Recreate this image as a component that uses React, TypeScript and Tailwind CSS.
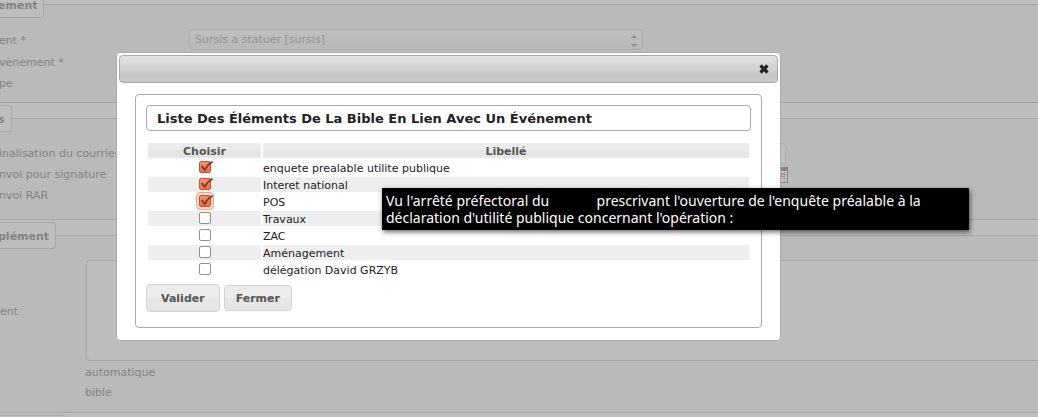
import { useState, type ReactNode } from 'react';

function Section({ title, className, children }: { title: string; className: string; children?: ReactNode }) {
  return (
    <fieldset className={`w-full min-w-0 border-y border-[#a8a8a8] bg-[#bababa] ${className}`}>
      <legend className="h-[27px] min-w-[10px] rounded-r border border-l-0 border-[#a8a8a8] bg-[#bebebe] pr-[6px] leading-[27px] font-bold">
        <span className="-ml-[2px] block">{title}</span>
      </legend>
      {children}
    </fieldset>
  );
}

function CalendarIcon() {
  return (
    <svg width="16" height="16" viewBox="0 0 16 16" aria-hidden="true" shapeRendering="crispEdges">
      <path d="M0 0h16v16H0z" fill="#85858a" />
      <path d="M1 4h14v11H1z" fill="#c2c2c2" />
      <path d="M1 7.5h14M1 11.5h14M4.500 4v11M8.500 4v11M12.500 4v11" stroke="#aaa" />
      <path d="M9.500 6.500h3v3h-3z" fill="none" stroke="#c08090" />
    </svg>
  );
}

const elements = [
  { label: 'enquete prealable utilite publique', checked: true },
  { label: 'Interet national', checked: true },
  { label: 'POS', checked: true },
  { label: 'Travaux', checked: false },
  { label: 'ZAC', checked: false },
  { label: 'Aménagement', checked: false },
  { label: 'délégation David GRZYB', checked: false },
];

function Tick({ id, initial, focused }: { id: string; initial: boolean; focused: boolean }) {
  const [on, setOn] = useState(initial);
  return (
    <span
      className={`relative -my-1 inline-flex size-[18px] items-center justify-center rounded border ${
        focused ? 'border-[#f2a285] bg-[#fbdcd0]' : 'border-transparent'
      }`}
    >
      <input
        id={id}
        type="checkbox"
        checked={on}
        onChange={() => setOn(!on)}
        className="size-3 appearance-none rounded-[2px] border border-[#948f8b] bg-white outline-none checked:border-[#bd5434] checked:bg-linear-to-b checked:from-[#fa9068] checked:to-[#ee6f43]"
      />
      {on && (
        <svg className="pointer-events-none absolute top-[2px] left-[2px]" width="14" height="12" viewBox="0 0 14 12" aria-hidden="true">
          <path d="M2.600 5.200 L5.800 8.800 C7.500 5.500 9.800 2.800 13.600 0.800" fill="none" stroke="#7b3c27" strokeWidth="1.800" />
        </svg>
      )}
    </span>
  );
}

const halftone = 'bg-linear-to-b from-[#ececec] from-50% to-[#e6e6e6] to-50%';

export default function App() {
  return (
    <div className="relative min-h-screen w-full overflow-hidden bg-[#bebebe] font-['DejaVu_Sans',sans-serif] text-[11px] text-[#828282]">
      <main className="-mt-[9px] flex h-[426px] flex-col gap-[2px] overflow-hidden">
        <Section title="ement" className="pb-[7px]">
          <div className="-ml-px pt-[11px] leading-6">
            <div className="flex h-[22px]">
              <label htmlFor="evenement" className="w-[190px]">ent *</label>
              <span className="relative">
                <select
                  id="evenement"
                  className="block h-[21px] w-[454px] appearance-none rounded border border-[#acacac] bg-linear-to-b from-[#bfbfbf] to-[#b8b8b8] pl-[5px] text-[11px] leading-5 text-[#929292]"
                >
                  <option>Sursis a statuer [sursis]</option>
                </select>
                <svg className="pointer-events-none absolute top-[5px] right-[6px]" width="6" height="13" viewBox="0 0 6 13" aria-hidden="true">
                  <path d="M0 4 3 1l3 3zM0 10l3 3 3-3z" fill="#8e8e8e" />
                </svg>
              </span>
            </div>
            <div className="h-[21px]">vènement *</div>
            <div className="h-[23px]">pe</div>
          </div>
        </Section>
        <Section title="s" className="pb-[13px]">
          <div className="-ml-px pt-[11px] leading-[22px]">
            <div className="flex h-[21px]">
              <label htmlFor="courrier" className="w-[190px] whitespace-nowrap">inalisation du courrier</label>
              <input id="courrier" className="h-[21px] w-[597px] rounded border border-[#acacac] bg-[#bfbfbf]" />
            </div>
            <div className="flex h-[21px]">
              <span className="w-[773px]">nvoi pour signature</span>
              <span className="pt-[3px]"><CalendarIcon /></span>
            </div>
            <div className="h-[21px]">nvoi RAR</div>
          </div>
        </Section>
        <Section title="plément" className="pb-[9px]">
          <div className="flex items-center pt-[11px]">
            <label htmlFor="complement" className="w-[86px] shrink-0 pt-[3px]">ent</label>
            <textarea id="complement" className="block h-[101px] min-w-0 flex-1 resize-none rounded-l border border-r-0 border-[#a8a8a8] bg-[#bebebe]" />
          </div>
          <div className="flex flex-col items-start pt-[2px] pl-[85px] leading-5">
            <a href="#automatique">automatique</a>
            <a href="#bible">bible</a>
          </div>
        </Section>
        <div className="h-[27px] w-[66px] shrink-0 rounded-r border border-l-0 border-[#a8a8a8]" />
      </main>

      <div role="dialog" aria-label="Liste des éléments" className="absolute top-[52px] left-[116px] w-[665px] rounded border border-[#aaa] bg-white p-[2px] text-[#222]">
        <div className="flex h-7 items-center justify-end rounded border border-[#aaa] bg-linear-to-b from-[#e2e2e2] to-[#c8c8c8] to-70% pr-[8px]">
          <button type="button" aria-label="Fermer la fenêtre">
            <svg width="10" height="10" viewBox="0 0 10 10" aria-hidden="true">
              <path d="M1.500 1.500l7 7M8.500 1.500l-7 7" stroke="#222" strokeWidth="3.200" />
            </svg>
          </button>
        </div>
        <div className="px-4 pt-[11px] pb-[10px]">
          <div className="rounded border border-[#aaa] px-[10px] pt-[10px] pb-[15px]">
            <h2 className="h-[26px] rounded border border-[#aaa] px-[10px] text-[13px] leading-[26px] font-bold">
              Liste Des Éléments De La Bible En Lien Avec Un Événement
            </h2>
            <table className="mt-[10px] w-full border-separate border-spacing-[2px]">
              <thead>
                <tr className="h-[15px] leading-[15px] text-[#555]">
                  <th className={`w-[113px] ${halftone}`}>
                    <div className="h-[15px] leading-[17px]">Choisir</div>
                  </th>
                  <th className={halftone}>
                    <div className="h-[15px] leading-[17px]">Libellé</div>
                  </th>
                </tr>
              </thead>
              <tbody>
                {elements.map((item, i) => (
                  <tr key={item.label} className="h-[15px] leading-[15px] [&:nth-child(even)>td]:bg-[#eee]">
                    <td className="align-top">
                      <div className="flex h-[14px] items-center justify-center">
                        <Tick id={`element-${i}`} initial={item.checked} focused={i === 2} />
                      </div>
                    </td>
                    <td>
                      <label htmlFor={`element-${i}`} className="block h-[15px] leading-[17px]">{item.label}</label>
                    </td>
                  </tr>
                ))}
              </tbody>
            </table>
            <div className="mt-[5px] flex items-center gap-1 font-bold text-[#555]">
              <button type="button" className={`h-7 rounded border border-[#d3d3d3] px-[14px] pt-[2px] ${halftone}`}>Valider</button>
              <button type="button" className={`h-[26px] rounded border border-[#d3d3d3] px-[11px] pt-[2px] ${halftone}`}>Fermer</button>
            </div>
          </div>
        </div>
      </div>

      <div
        role="tooltip"
        className="absolute top-[188px] left-[382px] w-[587px] bg-black p-1 font-['Noto_Sans',sans-serif] text-sm leading-[17px] whitespace-pre text-white shadow-[1px_2px_5px_rgba(0,0,0,0.6)]"
      >
        {"Vu l'arrêté préfectoral du             prescrivant l'ouverture de l'enquête préalable à la\ndéclaration d'utilité publique concernant l'opération :"}
      </div>
    </div>
  );
}
